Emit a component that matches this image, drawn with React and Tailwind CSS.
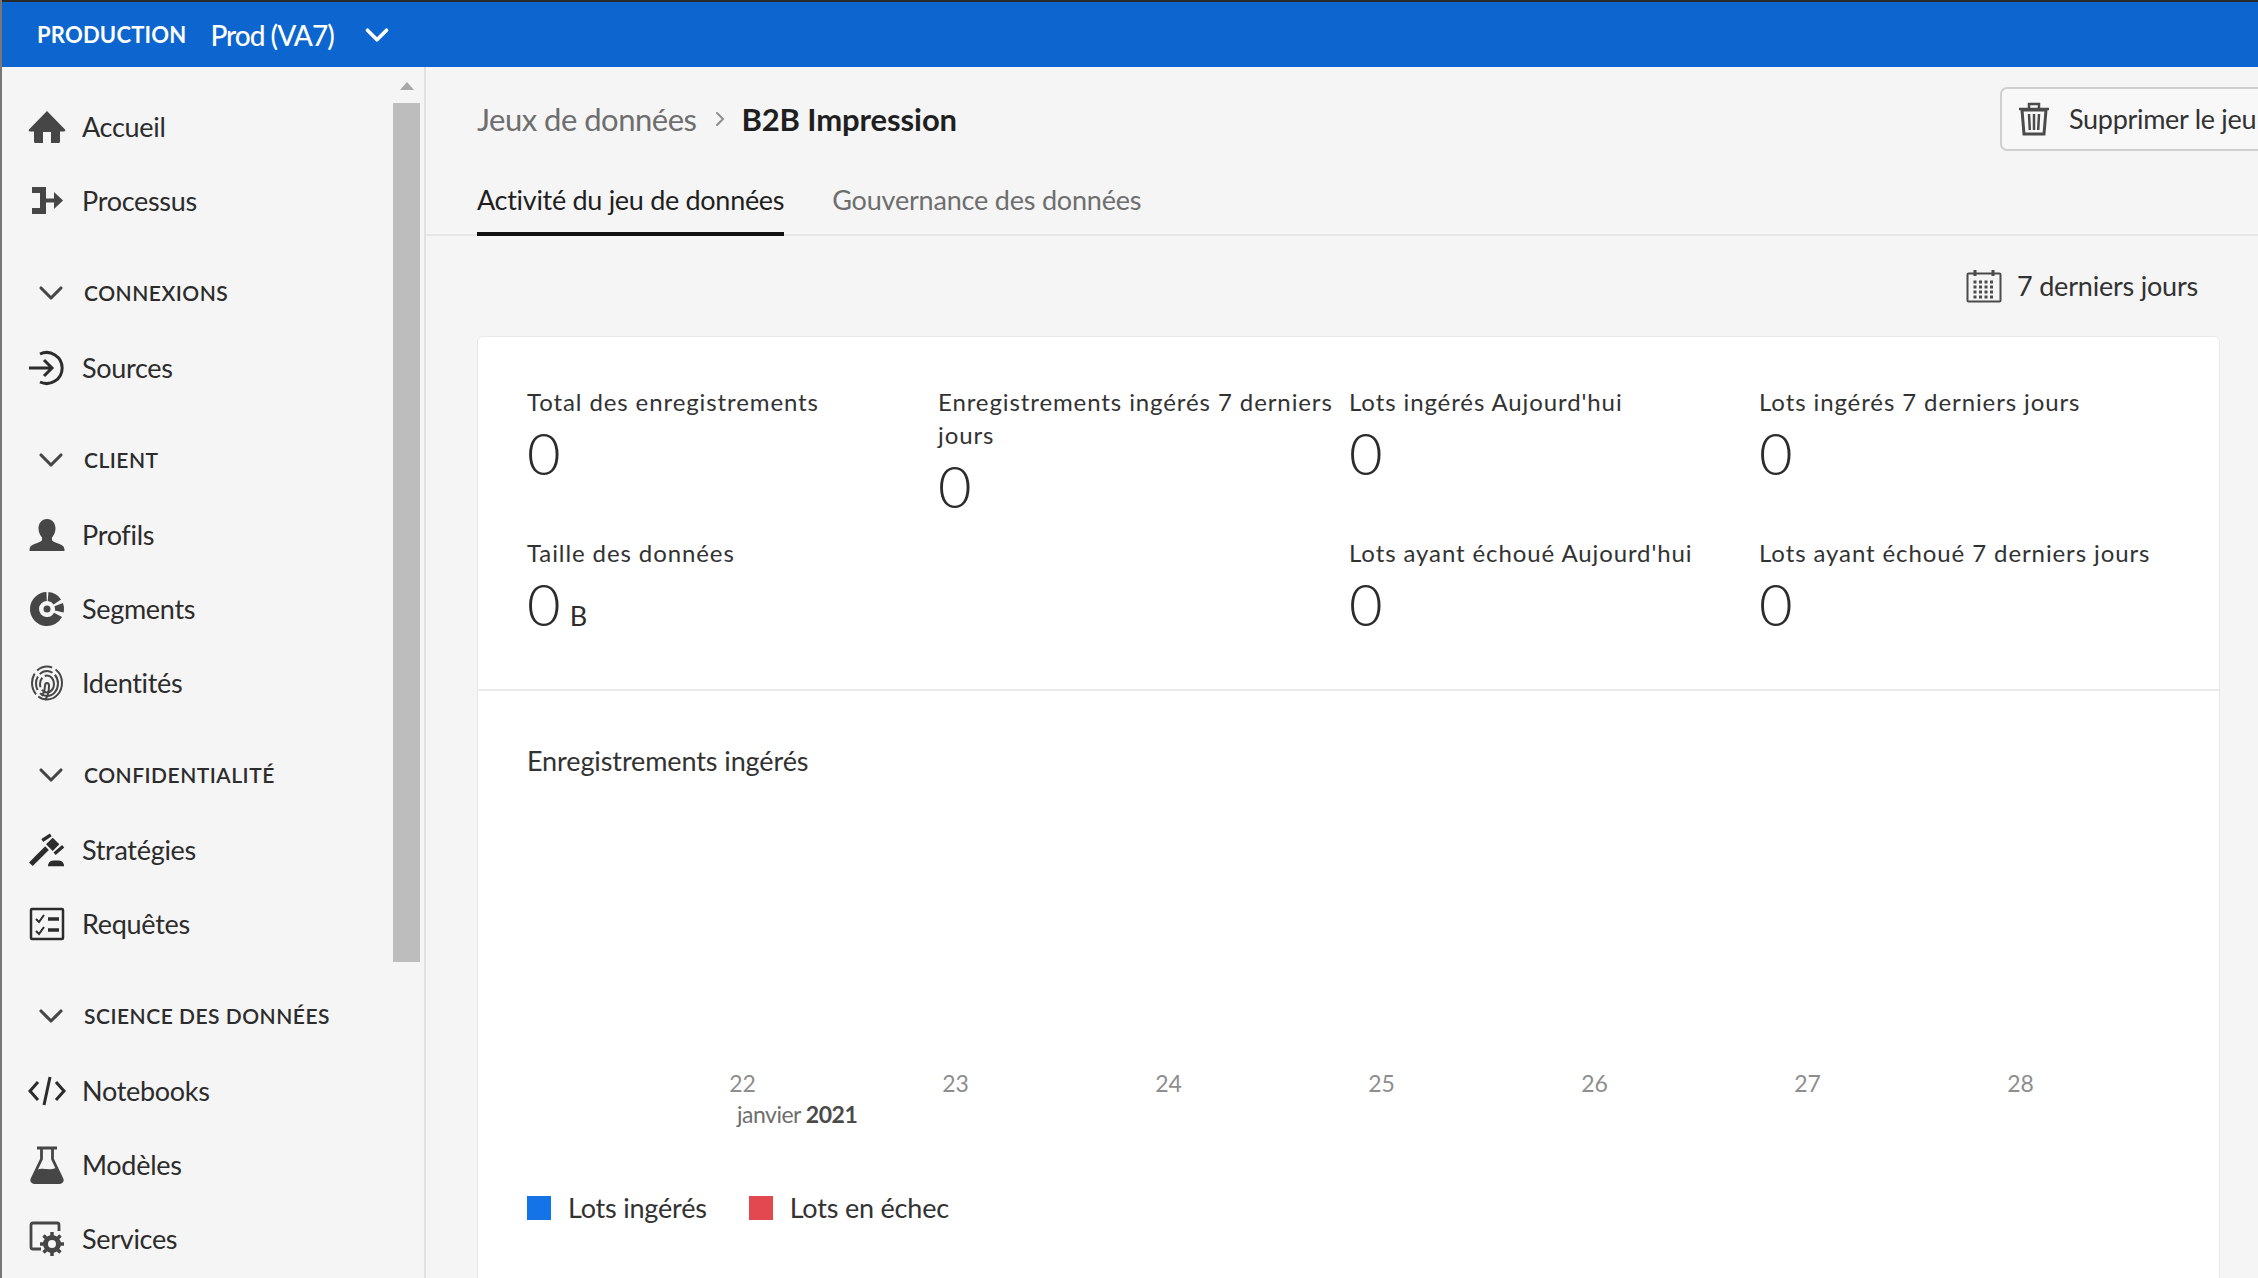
import { ChevronDown, ChevronRight } from "lucide-react";

function HomeIcon() {
  return (
    <svg viewBox="0 0 38 34" className="w-[38px] h-[34px]" fill="#464646">
      <path d="M19 1 1 19.500c-.8 1 0 2 1 2h4v10c0 .8.5 1.500 1.500 1.500H15V22h8v11h7.500c1 0 1.500-.7 1.500-1.500v-10h4c1 0 1.800-1 1-2Z" />
    </svg>
  );
}

function FlowIcon() {
  return (
    <svg viewBox="0 0 36 30" className="w-[36px] h-[30px]" fill="none" stroke="#464646">
      <path d="M3 4h11v21H3" strokeWidth="6" />
      <path d="M14 14.500h14" strokeWidth="4" />
      <path d="M25 6l9 8.500-9 8.500Z" fill="#464646" stroke="none" />
    </svg>
  );
}

function SourcesIcon() {
  return (
    <svg viewBox="0 0 38 36" className="w-[38px] h-[36px]" fill="none" stroke="#2c2c2c" strokeWidth="3">
      <path d="M12 4a15.500 15.500 0 1 1 0 28" />
      <path d="M1 18h23M16 10l8 8-8 8" />
    </svg>
  );
}

function ProfileIcon() {
  return (
    <svg viewBox="0 0 36 34" className="w-[36px] h-[34px]" fill="#464646">
      <path d="M18 1c-5.500 0-8.500 4.500-8.500 9.500 0 4 1.800 7 3.500 9v2.500c0 2-9 3.500-11.500 6.500-.8 1-1 3-1 4.500h35c0-1.500-.2-3.500-1-4.500-2.500-3-11.500-4.500-11.500-6.500v-2.500c1.700-2 3.500-5 3.500-9C26.500 5.500 23.500 1 18 1Z" />
    </svg>
  );
}

function SegmentsIcon() {
  return (
    <svg viewBox="0 0 36 36" className="w-[36px] h-[36px]" fill="none" stroke="#464646">
      <circle cx="18" cy="18" r="12.500" strokeWidth="9" strokeDasharray="11 3 7 3.500 52 2.500" transform="rotate(-85 18 18)" />
      <circle cx="18" cy="18" r="3.500" fill="#464646" stroke="none" />
    </svg>
  );
}

function FingerprintIcon() {
  return (
    <svg viewBox="0 0 34 36" className="w-[34px] h-[36px]" fill="none" stroke="#464646" strokeWidth="2">
      <ellipse cx="17" cy="18" rx="15" ry="16.500" strokeDasharray="34 3 22 4 16 4" />
      <ellipse cx="17" cy="18.500" rx="11" ry="12.500" strokeDasharray="26 4 14 3 14 3" />
      <ellipse cx="17" cy="19" rx="7" ry="8.500" strokeDasharray="18 3 10 3" />
      <path d="M15 35c3-4 4-8 4-14 0-2-1-3-2-3s-2 1-2 3c0 4-1 7-3 10" />
    </svg>
  );
}

function PolicyIcon() {
  return (
    <svg viewBox="0 0 40 36" className="w-[40px] h-[36px]" fill="none" stroke="#2c2c2c">
      <path d="M3 33 20 16" strokeWidth="5.500" />
      <path d="M15 8l9-6M28 22l9-8" strokeWidth="3.500" />
      <path d="M26 5l7 7-7 7-7-7Z" fill="#2c2c2c" stroke="none" />
      <path d="M21 35c0-3 2-6 5.500-6h6c3.500 0 5.500 3 5.500 6Z" fill="#2c2c2c" stroke="none" />
    </svg>
  );
}

function QueryIcon() {
  return (
    <svg viewBox="0 0 36 34" className="w-[36px] h-[34px]" fill="none" stroke="#2c2c2c">
      <rect x="2" y="2" width="32" height="30" strokeWidth="2.500" rx="1" />
      <path d="M7 12l3 3 5-7M7 24l3 3 5-7" strokeWidth="2" />
      <path d="M19 12h11M19 23h11" strokeWidth="3.500" />
    </svg>
  );
}

function CodeIcon() {
  return (
    <svg viewBox="0 0 38 30" className="w-[38px] h-[30px]" fill="none" stroke="#2c2c2c" strokeWidth="3">
      <path d="M10 6 2 15l8 9M28 6l8 9-8 9M22 1l-6 28" />
    </svg>
  );
}

function FlaskIcon() {
  return (
    <svg viewBox="0 0 34 38" className="w-[34px] h-[38px]" fill="none" stroke="#464646">
      <path d="M7 2h20M11.500 2v11L2 33c-.7 1.700.3 3.500 2 3.500h26c1.700 0 2.700-1.800 2-3.500L22.500 13V2" strokeWidth="2.800" />
      <path d="M7 24c6-3 11 1 19-2l6.500 12-1 3h-29l-1-3Z" fill="#464646" stroke="none" />
    </svg>
  );
}

function ServicesIcon() {
  return (
    <svg viewBox="0 0 36 36" className="w-[36px] h-[36px]" fill="none" stroke="#464646">
      <path d="M12 28H4a2 2 0 0 1-2-2V4a2 2 0 0 1 2-2h24a2 2 0 0 1 2 2v6" strokeWidth="2.800" />
      <circle cx="23" cy="23" r="6.500" strokeWidth="5" />
      <path d="M23 11v24M11 23h24M14.500 14.500l17 17M31.500 14.500l-17 17" strokeWidth="3.500" strokeDasharray="4 16 4" />
    </svg>
  );
}

function TrashIcon() {
  return (
    <svg viewBox="0 0 32 34" className="w-[32px] h-[34px] shrink-0" fill="none" stroke="#4b4b4b">
      <path d="M1 7h30M11 6V2h10v4" strokeWidth="2.500" />
      <path d="M4 8l2 24h20l2-24Z" strokeWidth="3" />
      <path d="M11 12l.8 16M16 12v16M21 12l-.8 16" strokeWidth="2.500" />
    </svg>
  );
}

function CalendarIcon() {
  return (
    <svg viewBox="0 0 36 34" className="w-[36px] h-[34px]" fill="none" stroke="#4b4b4b">
      <rect x="1.500" y="4.500" width="33" height="28" strokeWidth="2" rx="1" />
      <path d="M9 1v6M27 1v6" strokeWidth="3" />
      {[13, 18, 23, 28].map((y) => (
        <path key={y} d="M7.500 0h22" transform={`translate(0 ${y})`} strokeWidth="3" strokeDasharray="3 2.500" />
      ))}
    </svg>
  );
}

function NavItem({ icon, label }) {
  return (
    <div className="h-[74px] flex items-center pl-[26px]">
      <div className="w-[38px] flex justify-center shrink-0">{icon}</div>
      <span className="ml-[16px] text-[27px] text-[#2c2c2c] tracking-[-0.3px]">{label}</span>
    </div>
  );
}

function NavHeader({ label }) {
  return (
    <div className="h-[76px] mt-[17px] flex items-center pl-[29px]">
      <ChevronDown className="w-[40px] h-[40px] text-[#464646] shrink-0" strokeWidth={1.9} />
      <span className="ml-[13px] text-[21px] font-semibold text-[#2c2c2c] uppercase tracking-[0.5px]">{label}</span>
    </div>
  );
}

function Stat({ label, value, unit }) {
  return (
    <div className="pr-[10px]">
      <div className="text-[24px] leading-[33px] text-[#323232] tracking-[0.9px]">{label}</div>
      <div className="flex items-baseline text-[58px] leading-[70px] font-light text-[#2c2c2c]">
        {value}
        {unit && <span className="ml-[9px] text-[27px] font-normal">{unit}</span>}
      </div>
    </div>
  );
}

export default function App() {
  return (
    <div className="w-[2258px] h-[1278px] overflow-hidden flex flex-col bg-[#f5f5f5] border-l-2 border-[#777777] font-['Lato','Open_Sans',sans-serif]">
      <header className="h-[67px] shrink-0 bg-[#0d66d0] border-t-2 border-[#2a2a2a] flex items-center pl-[35px] text-white">
        <span className="text-[22px] font-bold tracking-[0.2px]">PRODUCTION</span>
        <span className="ml-[24px] text-[28px] font-medium tracking-[-1px]">Prod (VA7)</span>
        <ChevronDown className="ml-[24px] w-[38px] h-[38px]" strokeWidth={2.3} />
      </header>

      <div className="flex-1 flex min-h-0">
        <aside className="w-[424px] shrink-0 flex border-r-2 border-[#e1e1e1]">
          <nav className="flex-1 pt-[23px] overflow-hidden">
            <NavItem icon={<HomeIcon />} label="Accueil" />
            <NavItem icon={<FlowIcon />} label="Processus" />
            <NavHeader label="Connexions" />
            <NavItem icon={<SourcesIcon />} label="Sources" />
            <NavHeader label="Client" />
            <NavItem icon={<ProfileIcon />} label="Profils" />
            <NavItem icon={<SegmentsIcon />} label="Segments" />
            <NavItem icon={<FingerprintIcon />} label="Identités" />
            <NavHeader label="Confidentialité" />
            <NavItem icon={<PolicyIcon />} label="Stratégies" />
            <NavItem icon={<QueryIcon />} label="Requêtes" />
            <NavHeader label="Science des données" />
            <NavItem icon={<CodeIcon />} label="Notebooks" />
            <NavItem icon={<FlaskIcon />} label="Modèles" />
            <NavItem icon={<ServicesIcon />} label="Services" />
          </nav>
          <div className="w-[27px] mr-[4px] flex flex-col items-center pt-[15px]">
            <div className="w-0 h-0 border-x-[7px] border-x-transparent border-b-[8px] border-b-[#a8a8a8]" />
            <div className="w-full h-[859px] mt-[13px] bg-[#bdbdbd]" />
          </div>
        </aside>

        <main className="flex-1 min-w-0 overflow-hidden">
          <div className="px-[51px] border-b-2 border-[#e6e6e6]">
            <div className="h-[70px] mt-[17px] flex items-center">
              <span className="text-[31px] text-[#6e6e6e] tracking-[-0.5px]">Jeux de données</span>
              <ChevronRight className="ml-[12px] mr-[9px] w-[24px] h-[24px] text-[#8e8e8e]" strokeWidth={2} />
              <span className="text-[31px] font-bold text-[#1f1f1f] tracking-[-0.1px]">B2B Impression</span>
              <button className="ml-auto mr-[-93px] h-[64px] w-[300px] shrink-0 flex items-center pl-[16px] bg-[#f8f8f8] border-2 border-r-0 border-[#cfcfcf] rounded-l-[7px] text-[27px] text-[#323232] tracking-[-0.3px]">
                <TrashIcon />
                <span className="ml-[19px] whitespace-nowrap">Supprimer le jeu</span>
              </button>
            </div>
            <div className="flex gap-[48px] mt-[14px]">
              <div className="h-[68px] -mb-[2px] flex items-center border-b-[4px] border-[#111111] text-[27px] text-[#1f1f1f] tracking-[-0.3px]">
                Activité du jeu de données
              </div>
              <div className="h-[68px] -mb-[2px] flex items-center border-b-[4px] border-transparent text-[27px] text-[#6e6e6e] tracking-[-0.2px]">
                Gouvernance des données
              </div>
            </div>
          </div>

          <div className="h-[100px] flex items-center justify-end pr-[60px]">
            <CalendarIcon />
            <span className="ml-[15px] text-[27px] text-[#323232] tracking-[-0.2px]">7 derniers jours</span>
          </div>

          <section className="ml-[51px] w-[1743px] bg-white rounded-t-[6px] border border-[#e8e8e8] pb-[100px]">
            <div className="grid grid-cols-[411px_411px_410px_1fr] pl-[49px] pt-[48px] h-[354px] content-start border-b-2 border-[#eaeaea]">
              <div className="h-[151px]"><Stat label="Total des enregistrements" value="0" /></div>
              <div className="h-[151px]"><Stat label="Enregistrements ingérés 7 derniers jours" value="0" /></div>
              <div className="h-[151px]"><Stat label="Lots ingérés Aujourd'hui" value="0" /></div>
              <div className="h-[151px]"><Stat label="Lots ingérés 7 derniers jours" value="0" /></div>
              <Stat label="Taille des données" value="0" unit="B" />
              <div />
              <Stat label="Lots ayant échoué Aujourd'hui" value="0" />
              <Stat label="Lots ayant échoué 7 derniers jours" value="0" />
            </div>

            <div className="pl-[49px] pt-[52px]">
              <h2 className="text-[27px] leading-[36px] text-[#323232] tracking-[-0.1px]">Enregistrements ingérés</h2>
              <div className="mt-[289px] ml-[109px] flex text-[23px] leading-[30px] text-[#8e8e8e]">
                {[22, 23, 24, 25, 26, 27, 28].map((d) => (
                  <div key={d} className="w-[213px] text-center">{d}</div>
                ))}
              </div>
              <div className="mt-[1px] ml-[210px] text-[23px] leading-[30px] tracking-[-0.5px] text-[#6e6e6e]">
                janvier <span className="font-bold text-[#4b4b4b]">2021</span>
              </div>
              <div className="mt-[59px] flex items-center text-[27px] text-[#323232] tracking-[-0.2px]">
                <span className="w-[24px] h-[24px] bg-[#1473e6]" />
                <span className="ml-[17px]">Lots ingérés</span>
                <span className="ml-[42px] w-[24px] h-[24px] bg-[#e34850]" />
                <span className="ml-[17px]">Lots en échec</span>
              </div>
            </div>
          </section>
        </main>
      </div>
    </div>
  );
}
